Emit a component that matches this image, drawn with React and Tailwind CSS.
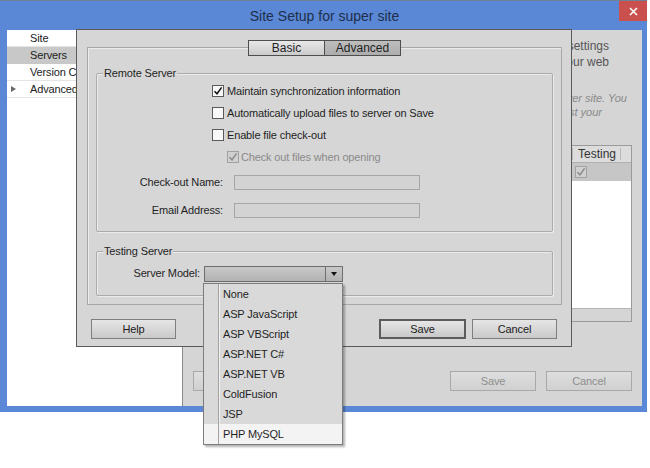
import React from "react";

function Check({ checked, disabled }) {
  return (
    <span
      className={
        disabled
          ? "w-[12px] h-[12px] border border-[#a2a2a2] bg-[#d0d0d0] flex items-center justify-center shrink-0"
          : "w-[12px] h-[12px] border border-[#5a5a5a] bg-[#f8f8f8] flex items-center justify-center shrink-0"
      }
    >
      {checked && (
        <svg width="10" height="10" viewBox="0 0 10 10">
          <path
            d="M1.5 5.2 L4 7.8 L8.6 1.4"
            fill="none"
            stroke={disabled ? "#8c8c8c" : "#111"}
            strokeWidth="1.5"
          />
        </svg>
      )}
    </span>
  );
}

function Btn({ children, variant }) {
  const cls =
    variant === "default"
      ? "h-[20px] flex items-center justify-center border-2 border-[#5c5c5c] bg-gradient-to-b from-[#e6e6e6] to-[#c9c9c9] text-[#1a1a1a]"
      : variant === "disabled"
      ? "h-[20px] flex items-center justify-center border border-[#a9a9a9] bg-gradient-to-b from-[#dedede] to-[#d0d0d0] text-[#8e8e8e]"
      : "h-[20px] flex items-center justify-center border border-[#7e7e7e] bg-gradient-to-b from-[#e6e6e6] to-[#c9c9c9] text-[#1a1a1a]";
  return <div className={cls + " w-full"}>{children}</div>;
}

function Group({ label, className, children }) {
  return (
    <div
      className={
        "relative border border-[#ababab] rounded-[2px] shadow-[inset_1px_1px_0_#ececec,1px_1px_0_#ececec] " +
        className
      }
    >
      <span className="absolute left-[6px] top-[-8px] px-[1px] bg-[#d6d6d6] leading-[14px] text-[#1f1f1f]">
        {label}
      </span>
      {children}
    </div>
  );
}

const items = [
  "None",
  "ASP JavaScript",
  "ASP VBScript",
  "ASP.NET C#",
  "ASP.NET VB",
  "ColdFusion",
  "JSP",
  "PHP MySQL",
];

export default function App() {
  return (
    <div className="relative w-[650px] h-[468px] bg-white overflow-hidden font-['Liberation_Sans',Arial,sans-serif] text-[11px] tracking-[-0.15px] text-[#1f1f1f]">
      {/* Outer window */}
      <div className="absolute left-0 top-0 w-[647px] h-[412px] bg-[#5b88d6] border-t border-t-[#6f7f96] flex flex-col pl-[7px] pr-[5px] pb-[6px]">
        <div className="relative h-[29px] flex items-center justify-center">
          <span className="text-[14px] tracking-normal text-[#1d2f4b] pt-[1px]">
            Site Setup for super site
          </span>
          <div className="absolute right-[-5px] top-[0px] w-[28px] h-[20px] bg-[#c9504c] flex items-center justify-center">
            <svg width="9" height="9" viewBox="0 0 9 9">
              <path d="M1 1 L8 8 M8 1 L1 8" stroke="#fff" strokeWidth="1.6" />
            </svg>
          </div>
        </div>
        <div className="flex-1 flex">
          {/* nav */}
          <div className="w-[176px] bg-white border-r border-[#8a8a8a] flex flex-col text-[#222]">
            <div className="h-[17px] flex items-center pl-[23px] border-b border-[#e4e4e4]">Site</div>
            <div className="h-[17px] flex items-center pl-[23px] bg-[#c8c8c8]">Servers</div>
            <div className="h-[17px] flex items-center pl-[23px] border-b border-[#e4e4e4]">
              Version Control
            </div>
            <div className="relative h-[17px] flex items-center pl-[23px] border-b border-[#e4e4e4]">
              <span className="absolute left-[4px] top-[5px] w-0 h-0 border-y-[3.5px] border-y-transparent border-l-[5px] border-l-[#6a6a6a]" />
              Advanced Settings
            </div>
          </div>
          {/* content */}
          <div className="flex-1 bg-[#d5d5d5] flex flex-col pt-[8px]">
            <div className="text-[12px] leading-[16px] text-[#555] whitespace-nowrap flex flex-col items-end tracking-normal">
              <div className="pr-[33px]">the web. The settings</div>
              <div className="pr-[33px]">administrator for your web</div>
            </div>
            <div className="mt-[21px] text-[11px] leading-[14px] italic text-[#8a8a8a] whitespace-nowrap flex flex-col items-end tracking-normal">
              <div className="pr-[15px]">a remote server site. You</div>
              <div className="pr-[40px]">to test your</div>
            </div>
            <div className="mt-[26px] mx-[10px] h-[177px] border border-[#9a9a9a] flex flex-col bg-[#d5d5d5]">
              <div className="h-[17px] flex items-center bg-[#dcdcdc] border-b border-[#b0b0b0]">
                <div className="flex-1 pl-[4px]">Name</div>
                <div className="w-[48px] flex items-center border-l border-[#b8b8b8] pl-[5px] h-[12px] text-[12px] tracking-normal text-[#333]">
                  Testing
                </div>
                <div className="w-[11px] h-[12px] border-l border-[#b8b8b8]" />
              </div>
              <div className="h-[18px] bg-[#c6c6c6] flex items-center">
                <div className="flex-1" />
                <div className="w-[59px] pl-[3px]">
                  <Check checked disabled />
                </div>
              </div>
              <div className="h-[127px] bg-white" />
              <div className="flex-1 bg-[#d5d5d5] border-t border-[#b4b4b4]" />
            </div>
            <div className="mt-[49px] px-[10px] flex items-center justify-between">
              <div className="w-[85px]">
                <Btn variant="disabled" />
              </div>
              <div className="flex gap-[10px]">
                <div className="w-[86px]">
                  <Btn variant="disabled">Save</Btn>
                </div>
                <div className="w-[86px]">
                  <Btn variant="disabled">Cancel</Btn>
                </div>
              </div>
            </div>
          </div>
        </div>
      </div>

      {/* Dialog */}
      <div className="absolute left-[76px] top-[29px] w-[496px] h-[318px] bg-[#d6d6d6] border border-[#5a5a5a] pl-[10px] pr-[9px] pt-[17px] flex flex-col">
        <div className="relative h-[258px] border border-[#a8a8a8] shadow-[inset_1px_1px_0_#ececec] px-[8px] pt-[25px] flex flex-col">
          <div className="absolute left-[160px] top-[-8px] flex text-[12px] tracking-normal">
            <div className="w-[77px] h-[16px] border border-[#4e4e4e] bg-gradient-to-b from-[#e8e8e8] to-[#cbcbcb] flex items-center justify-center">
              Basic
            </div>
            <div className="w-[76px] h-[16px] border border-[#4e4e4e] border-l-0 bg-gradient-to-b from-[#bdbdbd] to-[#adadad] flex items-center justify-center">
              Advanced
            </div>
          </div>

          <Group label="Remote Server" className="h-[159px] pt-[6px]">
            <div className="h-[22px] flex items-center pl-[115px]">
              <Check checked />
              <span className="ml-[3px]">Maintain synchronization information</span>
            </div>
            <div className="h-[22px] flex items-center pl-[115px]">
              <Check />
              <span className="ml-[3px]">Automatically upload files to server on Save</span>
            </div>
            <div className="h-[22px] flex items-center pl-[115px]">
              <Check />
              <span className="ml-[3px]">Enable file check-out</span>
            </div>
            <div className="h-[22px] flex items-center pl-[130px] text-[#8a8a8a]">
              <Check checked disabled />
              <span className="ml-[2px]">Check out files when opening</span>
            </div>
            <div className="h-[28px] flex items-center">
              <span className="w-[126px] text-right">Check-out Name:</span>
              <span className="ml-[11px] w-[186px] h-[15px] border border-[#a6a6a6] bg-[#d3d3d3]" />
            </div>
            <div className="h-[28px] flex items-center">
              <span className="w-[126px] text-right">Email Address:</span>
              <span className="ml-[11px] w-[186px] h-[15px] border border-[#a6a6a6] bg-[#d3d3d3]" />
            </div>
          </Group>

          <Group label="Testing Server" className="mt-[19px] h-[45px] pt-[7px]">
            <div className="h-[29px] flex items-center">
              <span className="w-[103px] text-right">Server Model:</span>
              <div className="ml-[4px] w-[139px] h-[16px] border border-[#6e6e6e] flex bg-gradient-to-b from-[#c8c8c8] to-[#b2b2b2]">
                <div className="flex-1" />
                <div className="w-[17px] border-l border-[#6e6e6e] flex items-center justify-center">
                  <span className="w-0 h-0 border-x-[3.5px] border-x-transparent border-t-[4px] border-t-[#111]" />
                </div>
              </div>
            </div>
          </Group>
        </div>

        <div className="mt-[14px] flex items-center text-[11px]">
          <div className="ml-[4px] w-[85px]">
            <Btn>Help</Btn>
          </div>
          <div className="flex-1" />
          <div className="w-[87px]">
            <Btn variant="default">Save</Btn>
          </div>
          <div className="ml-[6px] mr-[5px] w-[85px]">
            <Btn>Cancel</Btn>
          </div>
        </div>
      </div>

      {/* Dropdown list */}
      <div className="absolute left-[203px] top-[283px] w-[140px] h-[162px] bg-[#d9d9d9] border border-[#7c7c7c] shadow-[2px_2px_2px_rgba(0,0,0,0.3)] flex flex-col">
        <div className="absolute left-[14px] top-0 bottom-0 w-[2px] border-l border-[#a2a2a2] border-r border-r-[#f2f2f2]" />
        {items.map((it, i) => (
          <div
            key={it}
            className={
              i === items.length - 1
                ? "h-[20px] flex items-center pl-[19px] bg-[#f3f3f3] text-[#1f1f1f]"
                : "h-[20px] flex items-center pl-[19px] text-[#1f1f1f]"
            }
          >
            <span className="relative">{it}</span>
          </div>
        ))}
      </div>
    </div>
  );
}
